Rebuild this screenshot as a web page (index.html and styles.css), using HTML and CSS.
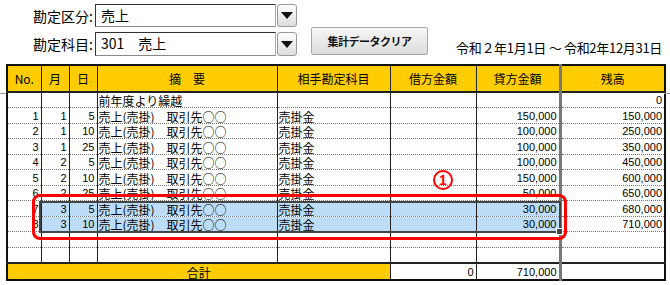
FILE: index.html
```html
<!DOCTYPE html>
<html lang="ja">

<head>
    <meta charset="UTF-8">
    <title>勘定科目別元帳</title>
    <link rel="stylesheet" href="styles.css">
</head>

<body>
    <div class="top">
        <div class="fields">
            <div class="field">
                <label>勘定区分:</label>
                <div class="select">売上</div>
                <span class="arrow"></span>
            </div>
            <div class="field">
                <label>勘定科目:</label>
                <div class="select">301　売上</div>
                <span class="arrow"></span>
            </div>
        </div>
        <button type="button" class="clear">集計データクリア</button>
        <div class="period">令和２年1月1日 ～ 令和2年12月31日</div>
    </div>

    <div class="sheet">
        <table>
            <colgroup>
                <col class="c-no">
                <col class="c-m">
                <col class="c-d">
                <col class="c-desc">
                <col class="c-acc">
                <col class="c-dr">
                <col class="c-cr">
                <col class="c-bal">
            </colgroup>
            <thead>
                <tr>
                    <th>No.</th>
                    <th class="dot-r">月</th>
                    <th>日</th>
                    <th>摘　要</th>
                    <th>相手勘定科目</th>
                    <th>借方金額</th>
                    <th class="thick-r">貸方金額</th>
                    <th>残高</th>
                </tr>
            </thead>
            <tbody>
                <tr>
                    <td></td><td class="dot-r"></td><td></td>
                    <td class="txt">前年度より繰越</td><td class="txt"></td>
                    <td></td><td class="thick-r"></td><td>0</td>
                </tr>
                <tr>
                    <td>1</td><td class="dot-r">1</td><td>5</td>
                    <td class="txt">売上(売掛)　取引先○○</td><td class="txt">売掛金</td>
                    <td></td><td class="thick-r">150,000</td><td>150,000</td>
                </tr>
                <tr>
                    <td>2</td><td class="dot-r">1</td><td>10</td>
                    <td class="txt">売上(売掛)　取引先○○</td><td class="txt">売掛金</td>
                    <td></td><td class="thick-r">100,000</td><td>250,000</td>
                </tr>
                <tr>
                    <td>3</td><td class="dot-r">1</td><td>25</td>
                    <td class="txt">売上(売掛)　取引先○○</td><td class="txt">売掛金</td>
                    <td></td><td class="thick-r">100,000</td><td>350,000</td>
                </tr>
                <tr>
                    <td>4</td><td class="dot-r">2</td><td>5</td>
                    <td class="txt">売上(売掛)　取引先○○</td><td class="txt">売掛金</td>
                    <td></td><td class="thick-r">100,000</td><td>450,000</td>
                </tr>
                <tr>
                    <td>5</td><td class="dot-r">2</td><td>10</td>
                    <td class="txt">売上(売掛)　取引先○○</td><td class="txt">売掛金</td>
                    <td></td><td class="thick-r">150,000</td><td>600,000</td>
                </tr>
                <tr>
                    <td>6</td><td class="dot-r">2</td><td>25</td>
                    <td class="txt">売上(売掛)　取引先○○</td><td class="txt">売掛金</td>
                    <td></td><td class="thick-r">50,000</td><td>650,000</td>
                </tr>
                <tr class="picked">
                    <td>7</td><td class="dot-r">3</td><td>5</td>
                    <td class="txt">売上(売掛)　取引先○○</td><td class="txt">売掛金</td>
                    <td></td><td class="thick-r">30,000</td><td>680,000</td>
                </tr>
                <tr class="picked">
                    <td>8</td><td class="dot-r">3</td><td>10</td>
                    <td class="txt">売上(売掛)　取引先○○</td><td class="txt">売掛金</td>
                    <td></td><td class="thick-r">30,000</td><td>710,000</td>
                </tr>
                <tr>
                    <td></td><td class="dot-r"></td><td></td><td></td><td></td>
                    <td></td><td class="thick-r"></td><td></td>
                </tr>
                <tr>
                    <td></td><td class="dot-r"></td><td></td><td></td><td></td>
                    <td></td><td class="thick-r"></td><td></td>
                </tr>
            </tbody>
            <tfoot>
                <tr>
                    <td colspan="5" class="total">合計</td>
                    <td>0</td>
                    <td class="thick-r">710,000</td>
                    <td></td>
                </tr>
            </tfoot>
        </table>

        <div class="selection"></div>
        <div class="marker"></div>
        <div class="badge">1</div>
    </div>
</body>

</html>
```

FILE: styles.css
```css
* {
    margin: 0;
    padding: 0;
    box-sizing: border-box;
}

body {
    width: 670px;
    height: 285px;
    overflow: hidden;
    background: #fff;
    color: #000;
    font-family: "Noto Sans CJK JP", "Liberation Sans", sans-serif;
}

/* controls above the sheet */
.top {
    height: 64px;
    display: flex;
    align-items: flex-start;
}

.fields {
    padding-top: 4px;
    display: flex;
    flex-direction: column;
    gap: 5px;
}

.field {
    display: flex;
    align-items: center;
    height: 23px;
}

.field + .field {
    height: 24px;
}

.field label {
    width: 95px;
    padding-right: 2px;
    text-align: right;
    font-size: 14px;
    line-height: 1;
}

.select {
    width: 181px;
    height: 100%;
    border: 1px solid #333;
    border-right-color: #aaa;
    border-bottom-color: #888;
    padding-left: 5px;
    font-size: 14px;
    line-height: 21px;
}

.arrow {
    width: 20px;
    height: 100%;
    margin-left: 1px;
    border: 1px solid #999;
    border-radius: 3px;
    background: linear-gradient(#fdfdfd, #dedede);
    display: flex;
    align-items: center;
    justify-content: center;
}

.arrow::after {
    content: "";
    border-left: 6px solid transparent;
    border-right: 6px solid transparent;
    border-top: 7px solid #111;
}

.clear {
    width: 117px;
    height: 28px;
    margin: 27px 0 0 14px;
    border: 1px solid #a8a8a8;
    border-radius: 2px;
    background: linear-gradient(#f6f6f6, #dcdcdc);
    font-family: inherit;
    font-size: 11px;
    font-weight: bold;
    letter-spacing: -0.5px;
    color: #111;
}

.period {
    margin: 40px 0 0 28px;
    font-size: 13px;
    line-height: 16px;
    letter-spacing: -0.3px;
}

/* the sheet */
.sheet {
    position: relative;
    padding-left: 6px;
}

/* frozen pane line either side of the grid */
.sheet::before,
.sheet::after {
    content: "";
    position: absolute;
    top: 29px;
    width: 6px;
    border-top: 1px solid #999;
}

.sheet::before {
    left: 0;
}

.sheet::after {
    right: 0;
}

table {
    width: 658px;
    table-layout: fixed;
    border-collapse: collapse;
    border: 2px solid #111;
    font-family: "Liberation Sans", "Noto Sans CJK JP", sans-serif;
    font-size: 11px;
}

.c-no { width: 34px; }
.c-m { width: 28px; }
.c-d { width: 28px; }
.c-desc { width: 180px; }
.c-acc { width: 113px; }
.c-dr { width: 86px; }
.c-cr { width: 84px; }
.c-bal { width: 105px; }

th,
td {
    border-left: 1px solid #222;
    border-right: 1px solid #222;
    white-space: nowrap;
    overflow: hidden;
}

th {
    height: 27px;
    background: #ffcc00;
    font-family: "Noto Sans CJK JP", sans-serif;
    font-weight: normal;
    font-size: 12px;
    border-bottom: 2px solid #222;
}

td {
    height: 15.5px;
    line-height: 13px;
    padding: 0 2px 0 0;
    text-align: right;
    vertical-align: bottom;
    border-bottom: 1px dotted #777;
}

td.txt,
td.total {
    font-family: "Noto Sans CJK JP", sans-serif;
    font-size: 12px;
}

td.txt {
    text-align: left;
    padding: 0 0 0 1px;
}

.dot-r {
    border-right: 1px dotted #888;
}

.thick-r {
    border-right: 3px solid #777;
}

tbody tr:last-child td {
    border-bottom: 2px solid #222;
}

.picked td {
    background: #bcdcf8;
}

.picked td:first-child,
.picked td:last-child {
    background: #fff;
}

tfoot td {
    height: 17px;
    border-bottom: none;
}

tfoot td.total {
    background: #ffcc00;
    text-align: center;
    padding: 0;
}

/* things drawn over the grid */
.selection {
    position: absolute;
    left: 39px;
    top: 137px;
    width: 522px;
    height: 32px;
    border: 2px solid #444;
}

.selection::after {
    content: "";
    position: absolute;
    right: -4px;
    bottom: -4px;
    width: 5px;
    height: 5px;
    background: #444;
    border: 1px solid #fff;
}

.marker {
    position: absolute;
    left: 32px;
    top: 130px;
    width: 535px;
    height: 46px;
    border: 3px solid #ff0000;
    border-radius: 8px;
}

.badge {
    position: absolute;
    left: 433px;
    top: 106px;
    width: 20px;
    height: 20px;
    border: 2px solid #ff0000;
    border-radius: 50%;
    color: #ff0000;
    font-family: "Liberation Sans", sans-serif;
    font-size: 14px;
    font-weight: bold;
    line-height: 16px;
    text-align: center;
}
```
